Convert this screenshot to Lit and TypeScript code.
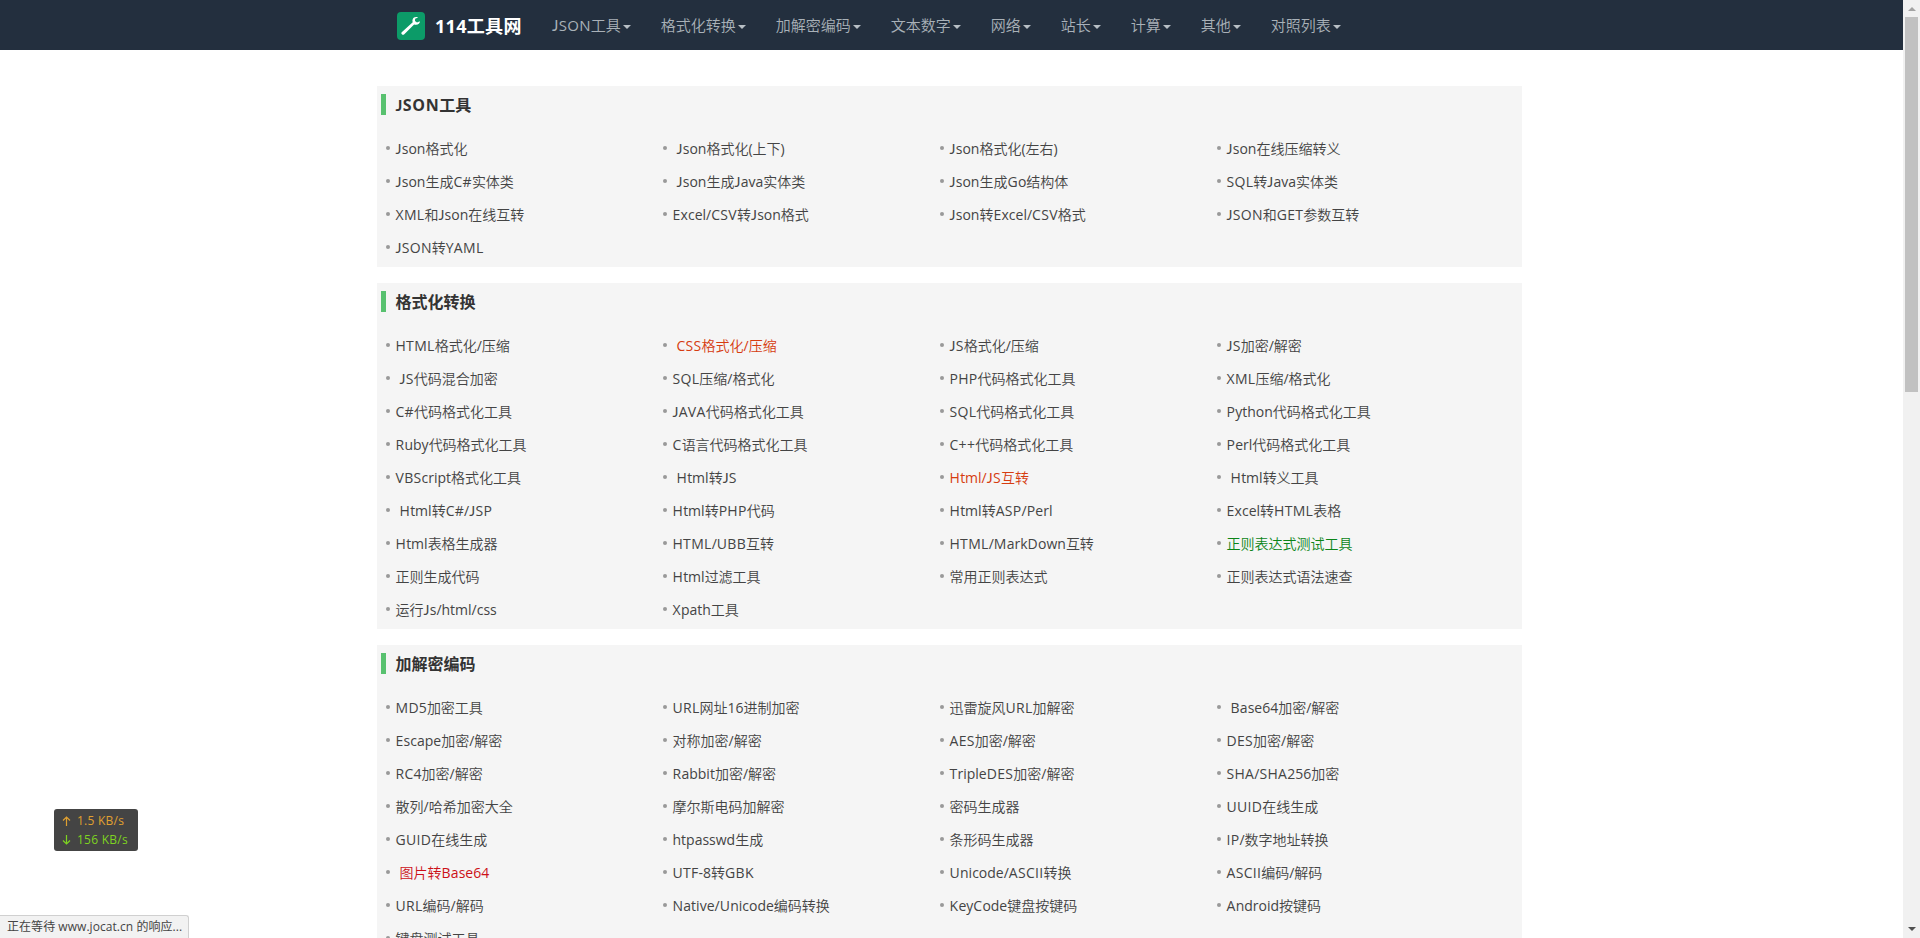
import { LitElement, html, css } from "lit";
import { customElement, property } from "lit/decorators.js";

type Tool = { label: string; tone?: string; indent?: boolean };
const t = (label: string, tone = ""): Tool => ({ label: label.trim(), tone, indent: label.startsWith(" ") });

const MENU = ["JSON工具", "格式化转换", "加解密编码", "文本数字", "网络", "站长", "计算", "其他", "对照列表"];

const SECTIONS: { title: string; tools: Tool[] }[] = [
  {
    title: "JSON工具",
    tools: [
      t("Json格式化"), t(" Json格式化(上下)"), t("Json格式化(左右)"), t("Json在线压缩转义"),
      t("Json生成C#实体类"), t(" Json生成Java实体类"), t("Json生成Go结构体"), t("SQL转Java实体类"),
      t("XML和Json在线互转"), t("Excel/CSV转Json格式"), t("Json转Excel/CSV格式"), t("JSON和GET参数互转"),
      t("JSON转YAML"),
    ],
  },
  {
    title: "格式化转换",
    tools: [
      t("HTML格式化/压缩"), t(" CSS格式化/压缩", "orange"), t("JS格式化/压缩"), t("JS加密/解密"),
      t(" JS代码混合加密"), t("SQL压缩/格式化"), t("PHP代码格式化工具"), t("XML压缩/格式化"),
      t("C#代码格式化工具"), t("JAVA代码格式化工具"), t("SQL代码格式化工具"), t("Python代码格式化工具"),
      t("Ruby代码格式化工具"), t("C语言代码格式化工具"), t("C++代码格式化工具"), t("Perl代码格式化工具"),
      t("VBScript格式化工具"), t(" Html转JS"), t("Html/JS互转", "orange"), t(" Html转义工具"),
      t(" Html转C#/JSP"), t("Html转PHP代码"), t("Html转ASP/Perl"), t("Excel转HTML表格"),
      t("Html表格生成器"), t("HTML/UBB互转"), t("HTML/MarkDown互转"), t("正则表达式测试工具", "green"),
      t("正则生成代码"), t("Html过滤工具"), t("常用正则表达式"), t("正则表达式语法速查"),
      t("运行Js/html/css"), t("Xpath工具"),
    ],
  },
  {
    title: "加解密编码",
    tools: [
      t("MD5加密工具"), t("URL网址16进制加密"), t("迅雷旋风URL加解密"), t(" Base64加密/解密"),
      t("Escape加密/解密"), t("对称加密/解密"), t("AES加密/解密"), t("DES加密/解密"),
      t("RC4加密/解密"), t("Rabbit加密/解密"), t("TripleDES加密/解密"), t("SHA/SHA256加密"),
      t("散列/哈希加密大全"), t("摩尔斯电码加解密"), t("密码生成器"), t("UUID在线生成"),
      t("GUID在线生成"), t("htpasswd生成"), t("条形码生成器"), t("IP/数字地址转换"),
      t(" 图片转Base64", "red"), t("UTF-8转GBK"), t("Unicode/ASCII转换"), t("ASCII编码/解码"),
      t("URL编码/解码"), t("Native/Unicode编码转换"), t("KeyCode键盘按键码"), t("Android按键码"),
      t("键盘测试工具"),
    ],
  },
];

// Capitals are spaced a little wider, the J keeps to the baseline, and Han runs are drawn lighter.
const label = (text: string) =>
  text.split(/(J|[A-IK-Z+#]+|[\u4e00-\u9fff]+)/).filter(Boolean).map((part) => {
    if (part === "J") return html`<span class="j">J</span>`;
    if (/^[A-Z+#]/.test(part)) return html`<span class="caps">${part}</span>`;
    if (/^[\u4e00-\u9fff]/.test(part)) return html`<span class="han">${part}</span>`;
    return part;
  });

const shared = css`
  .j { font-family: Lato, sans-serif; letter-spacing: 0.3px; }
  .caps { letter-spacing: 0.3px; }
`;

@customElement("site-nav")
class SiteNav extends LitElement {
  static styles = [shared, css`
    :host { display: block; height: 50px; background: #232f3e; }
    .bar { display: flex; align-items: center; height: 50px; padding-left: 397px; }
    .logo { width: 28px; height: 28px; margin-top: 2px; flex: none; }
    .brand { width: 127px; box-sizing: border-box; padding: 1px 0 0 10px; font-size: 18px; letter-spacing: 0.3px; font-weight: 700; color: #fff; white-space: nowrap; line-height: 50px; }
    .item { display: flex; align-items: center; font-size: 15px; line-height: 50px; color: #a9b1b8; padding-right: 30px; white-space: nowrap; }
    .item .han { font-weight: 350; }
    .caret { margin: 4px 0 0 2px; border: 4px solid transparent; border-top-color: #b8bfc5; border-bottom: 0; }
  `];
  render() {
    return html`<nav class="bar">
      <svg class="logo" viewBox="0 0 28 28">
        <rect width="28" height="28" rx="4" fill="#0c9b68" />
        <path fill="#fff" d="M22.900 9.200L20 10.600l-2-1.500.1-2.300 3-1.200c-2.300-1.100-4.600-.3-5.400 1.700-.4 1-.4 1.900 0 2.900L5 19.900c-.9.8-.8 1.700-.1 2.400.7.7 1.600.7 2.400-.1l9.800-9.700c3.300 1.100 5.900-.8 5.800-3.300z" />
      </svg>
      <span class="brand">114工具网</span>
      ${MENU.map((m) => html`<span class="item"><span>${label(m)}</span><i class="caret"></i></span>`)}
    </nav>`;
  }
}

@customElement("tool-panel")
class ToolPanel extends LitElement {
  @property({ attribute: false }) section = SECTIONS[0];
  static styles = [shared, css`
    :host { display: block; background: #f5f5f5; padding: 8px 0 3px 4px; }
    .title { display: flex; align-items: center; margin: 0 0 17px; height: 21px; padding-left: 9.5px; border-left: 5px solid #58c16f; font-size: 16px; font-weight: 700; color: #333; line-height: 21px; }
    .title > span { padding-top: 2px; }
    .title .caps { letter-spacing: 0.7px; }
    .grid { display: grid; grid-template-columns: repeat(4, 277px); grid-auto-rows: 33px; }
    .tool { display: flex; align-items: center; font-size: 14px; line-height: 33px; padding-left: 4.500px; color: #444; white-space: nowrap; }
    .tool .han { font-weight: 350; }
    .tool::before { content: ""; width: 4px; height: 4px; margin: 0 6px 1px 0; border-radius: 50%; background: #999; }
    .indent { padding-left: 4px; }
    .orange { color: #d63c10; }
    .green { color: #0b8518; }
    .red { color: #cc1018; }
  `];
  render() {
    return html`<h2 class="title"><span>${label(this.section.title)}</span></h2>
      <div class="grid">
        ${this.section.tools.map((x) => html`<div class="tool"><span class="${x.tone} ${x.indent ? "indent" : ""}">${label(x.label)}</span></div>`)}
      </div>`;
  }
}

@customElement("app-root")
class AppRoot extends LitElement {
  static styles = css`
    :host { display: block; position: relative; height: 938px; overflow: hidden; background: #fff; font-family: "Open Sans", "Noto Sans CJK SC", sans-serif; }
    .window { display: grid; grid-template-columns: 1fr 17px; height: 938px; }
    .page { overflow: hidden; height: 938px; }
    .content { display: flex; flex-direction: column; gap: 16px; width: 1145px; margin: 35.6px 0 0 377px; }
    .scroll { display: flex; flex-direction: column; align-items: center; background: #f1f1f1; }
    .up { margin-top: 7px; border: 4px solid transparent; border-top: 0; border-bottom-color: #a3a3a3; }
    .thumb { width: 13px; height: 375px; margin-top: 6px; background: #c1c1c1; }
    .down { margin: auto 0 7px; border: 4px solid transparent; border-bottom: 0; border-top-color: #505050; }
    .speed { position: absolute; left: 54px; top: 809px; width: 84px; height: 42px; box-sizing: border-box; padding: 2px 0 0 8px; border-radius: 3px; background: #444; font-size: 12px; line-height: 19px; letter-spacing: 0.25px; }
    .rate { display: flex; align-items: center; gap: 6px; white-space: nowrap; }
    .sent { color: #e0a030; }
    .received { color: #7ed321; }
    .arrow { width: 9px; height: 10px; fill: none; stroke: currentColor; stroke-width: 1.2; }
    .status { position: absolute; left: 0; bottom: 0; width: 189px; height: 23px; box-sizing: border-box; padding-left: 7px; border: 1px solid #d0d0d0; border-width: 1px 1px 0 0; border-radius: 0 3px 0 0; background: #f2f2f2; color: #444; font-size: 12px; line-height: 22px; letter-spacing: 0.05px; white-space: nowrap; }
  `;
  render() {
    return html`<div class="window">
        <div class="page">
          <site-nav></site-nav>
          <main class="content">${SECTIONS.map((s) => html`<tool-panel .section=${s}></tool-panel>`)}</main>
        </div>
        <div class="scroll"><i class="up"></i><i class="thumb"></i><i class="down"></i></div>
      </div>
      <div class="speed">
        <div class="rate sent"><svg class="arrow" viewBox="0 0 9 10"><path d="M4.500 10V1M1 4.500L4.500 1 8 4.500" /></svg>1.5 KB/s</div>
        <div class="rate received"><svg class="arrow" viewBox="0 0 9 10"><path d="M4.500 0v9M1 5.500L4.500 9 8 5.500" /></svg>156 KB/s</div>
      </div>
      <div class="status">正在等待 www.jocat.cn 的响应...</div>`;
  }
}
